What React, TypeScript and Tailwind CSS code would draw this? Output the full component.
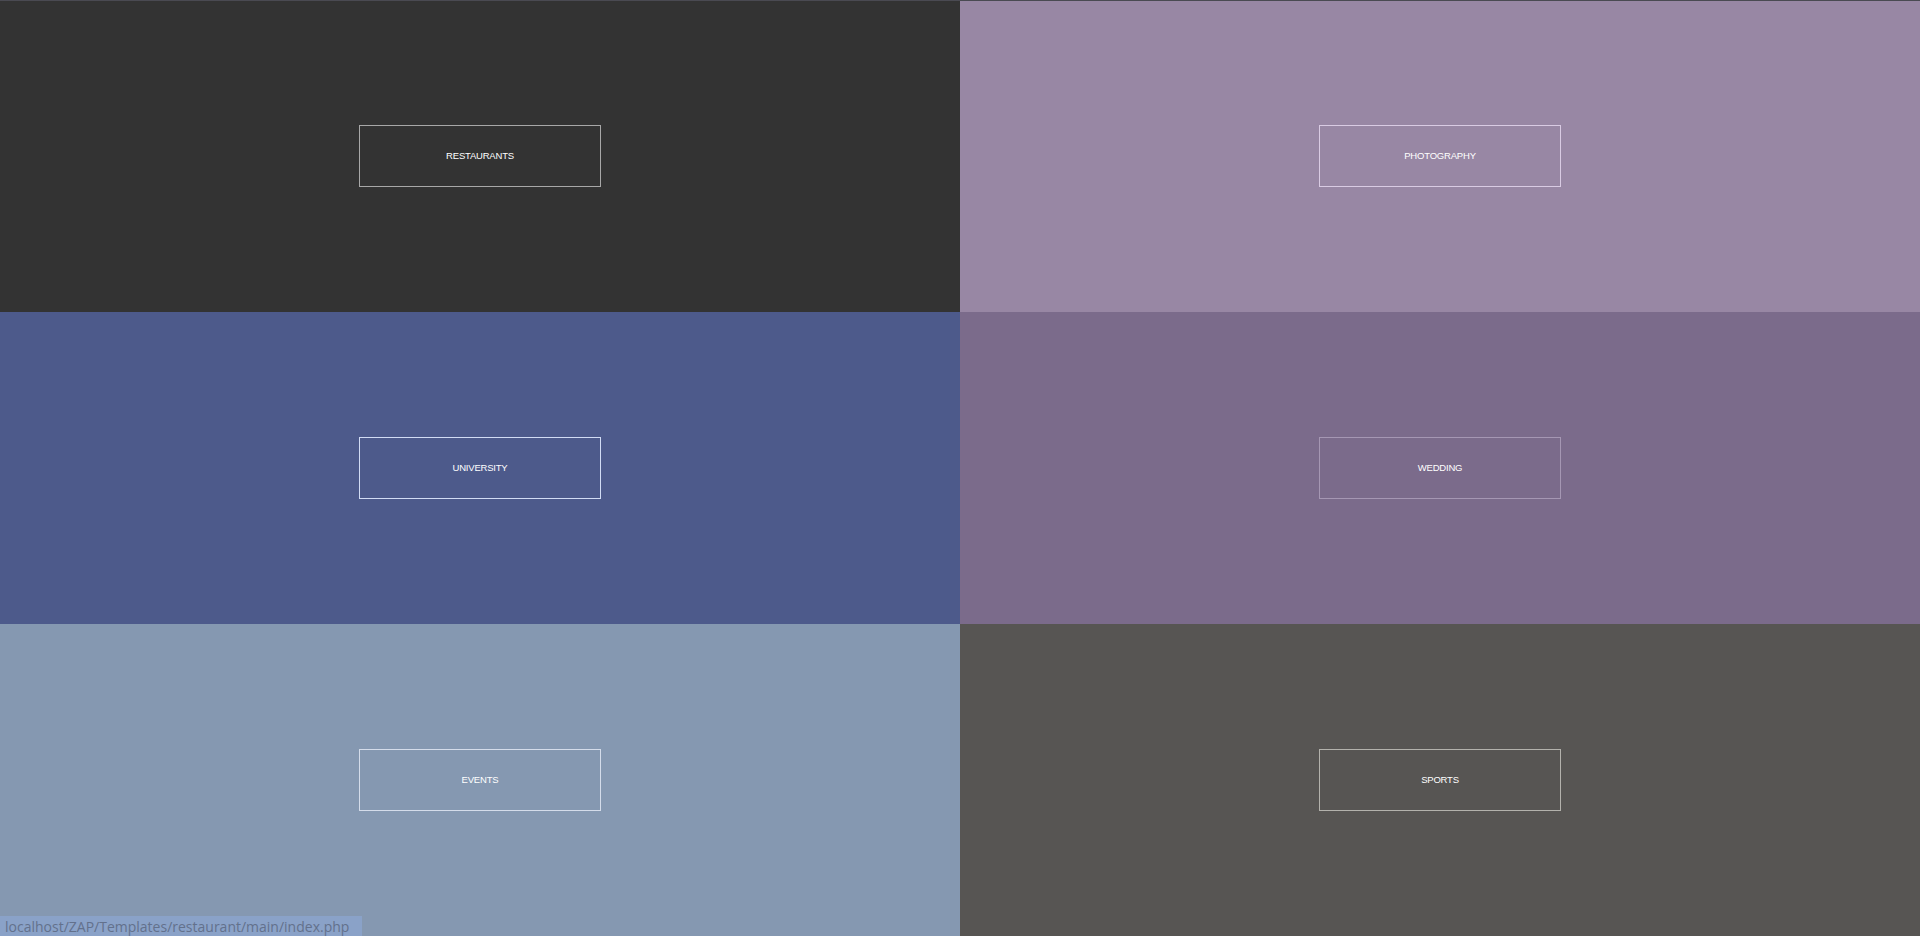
import React from 'react';

const tiles = [
  { label: 'RESTAURANTS', bg: 'bg-[#333333]', border: 'border-[#a8a8a8]' },
  { label: 'PHOTOGRAPHY', bg: 'bg-[#9887a4]', border: 'border-[#d9cbe3]' },
  { label: 'UNIVERSITY', bg: 'bg-[#4d5a8b]', border: 'border-[#d2dcf4]' },
  { label: 'WEDDING', bg: 'bg-[#7b6b8b]', border: 'border-[#a597b3]' },
  { label: 'EVENTS', bg: 'bg-[#8598b1]', border: 'border-[#d4dcea]' },
  { label: 'SPORTS', bg: 'bg-[#575553]', border: 'border-[#b3b2ac]' },
];

const App: React.FC = () => {
  return (
    <div className="relative w-full h-[936px] overflow-hidden font-['Liberation_Sans',Arial,sans-serif]">
      <div className="grid grid-cols-2 grid-rows-3 h-full">
        {tiles.map((tile) => (
          <div key={tile.label} className={`flex items-center justify-center ${tile.bg}`}>
            <a
              href="#"
              className={`flex items-center justify-center w-[242px] h-[62px] border ${tile.border} text-white text-[9.5px] tracking-[-0.2px] pt-px`}
            >
              {tile.label}
            </a>
          </div>
        ))}
      </div>

      {/* thin line at the very top of the window */}
      <div className="absolute top-0 left-0 right-0 h-px bg-[#4a4a52]" />

      {/* browser status bar */}
      <div className="absolute left-0 bottom-0 h-[20px] w-[362px] bg-[#8aa2c8] pl-[5px] flex items-center text-[14px] text-[#63718c] font-['Open_Sans',sans-serif]">
        localhost/ZAP/Templates/restaurant/main/index.php
      </div>
    </div>
  );
};

export default App;
